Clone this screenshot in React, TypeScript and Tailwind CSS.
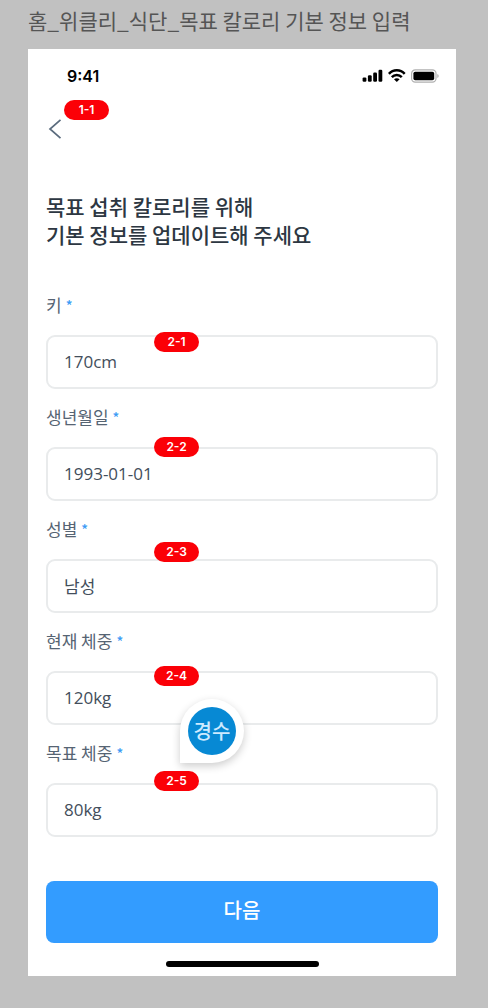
import React, { useState } from 'react';

interface Field {
  id: string;
  label: string;
  value: string;
  tag: string;
  tagPosition: string;
}

const initialFields: Field[] = [
  { id: 'height', label: '키', value: '170cm', tag: '2-1', tagPosition: '-top-[3px]' },
  { id: 'birth', label: '생년월일', value: '1993-01-01', tag: '2-2', tagPosition: '-top-2.5' },
  { id: 'gender', label: '성별', value: '남성', tag: '2-3', tagPosition: '-top-[17px]' },
  { id: 'weight', label: '현재 체중', value: '120kg', tag: '2-4', tagPosition: '-top-[5px]' },
  { id: 'target', label: '목표 체중', value: '80kg', tag: '2-5', tagPosition: '-top-3' },
];

const Tag = ({ text, className }: { text: string; className: string }) => (
  <span
    className={`absolute flex h-5 w-[45px] items-center justify-center rounded-full bg-[#fb0007] font-['Inter',sans-serif] text-xs font-semibold text-white ${className}`}
  >
    {text}
  </span>
);

const StatusIcons = () => (
  <svg width="76" height="14" viewBox="0 0 76 14" fill="none" className="overflow-visible" aria-hidden="true">
    {/* Signal */}
    <rect x="0.6" y="8.4" width="3.8" height="4.4" rx="1.2" fill="#000" />
    <rect x="5.9" y="6.2" width="3.8" height="6.6" rx="1.2" fill="#000" />
    <rect x="11.2" y="3.6" width="3.8" height="9.2" rx="1.2" fill="#000" />
    <rect x="16.5" y="0.8" width="3.8" height="12" rx="1.2" fill="#000" />
    {/* Wifi */}
    <path d="M26.9 4.9C31.2 0 38.4 0 42.7 4.9" stroke="#000" strokeWidth="2.4" />
    <path d="M29.8 8.1C32.5 5.2 37.1 5.2 39.8 8.1" stroke="#000" strokeWidth="2.4" />
    <path d="M34.8 13L32 10.3C33.6 8.9 36 8.9 37.6 10.3Z" fill="#000" />
    {/* Battery */}
    <rect x="49.6" y="0.9" width="24.4" height="12.2" rx="3.6" stroke="#b0b0b0" strokeWidth="1.2" />
    <rect x="51.4" y="2.7" width="20.8" height="8.6" rx="1.8" fill="#000" />
    <path d="M75.4 5C77 5.6 77 8.4 75.4 9Z" fill="#a6a6a6" />
  </svg>
);

const App = () => {
  const [fields, setFields] = useState<Field[]>(initialFields);

  const handleChange = (id: string, value: string) => {
    setFields(fields.map((field) => (field.id === id ? { ...field, value } : field)));
  };

  return (
    <div className="min-h-screen bg-[#c1c1c1] pr-8 pb-8 pl-7 font-['Noto_Sans_CJK_KR',sans-serif]">
      <p className="flex h-[49px] items-center pb-2 text-[21px] whitespace-nowrap text-[#555]">
        홈_위클리_식단_목표 칼로리 기본 정보 입력
      </p>

      <main className="relative bg-white px-[18px] pb-[9px]">
        {/* Status bar */}
        <div className="flex h-[54px] items-center justify-between pl-[21px]">
          <span className="font-['Inter',sans-serif] text-base font-semibold text-black">9:41</span>
          <StatusIcons />
        </div>

        {/* Header */}
        <header className="relative flex h-[52px] items-center">
          <button type="button" aria-label="뒤로" className="px-0.5">
            <svg width="14" height="22" viewBox="0 0 14 22" fill="none">
              <path d="M12.5 1.8L2 11L12.5 20.2" stroke="#5a6b7d" strokeWidth="1.7" />
            </svg>
          </button>
          <Tag text="1-1" className="-top-[3px] left-[18px]" />
        </header>

        <h1 className="mt-[37px] text-[21px] leading-7 font-medium text-[#2d3742]">
          목표 섭취 칼로리를 위해
          <br />
          기본 정보를 업데이트해 주세요
        </h1>

        <form onSubmit={(e) => e.preventDefault()}>
          {/* Fields */}
          <div className="mt-[45px] flex flex-col gap-4">
            {fields.map((field) => (
              <div key={field.id} className="flex flex-col gap-[18px]">
                <label htmlFor={field.id} className="flex h-6 items-center gap-1 text-[17px] text-[#566473]">
                  {field.label}
                  <span className="text-sm font-medium text-[#3b9bf5]">*</span>
                </label>
                <div className="relative">
                  <input
                    id={field.id}
                    type="text"
                    value={field.value}
                    onChange={(e) => handleChange(field.id, e.target.value)}
                    className="block h-[54px] w-full rounded-[9px] border-2 border-[#e9ebec] bg-white px-4 pb-0.5 font-['Open_Sans','Noto_Sans_CJK_KR',sans-serif] text-[17px] text-[#434e5b] outline-none"
                  />
                  <Tag text={field.tag} className={`left-[108px] ${field.tagPosition}`} />
                </div>
              </div>
            ))}
          </div>

          <button
            type="submit"
            className="mt-11 flex h-[62px] w-full items-center justify-center rounded-lg bg-[#339cff] pb-1 text-xl font-medium text-white"
          >
            다음
          </button>
        </form>

        <div className="mx-auto mt-[18px] h-1.5 w-[153px] rounded-full bg-black" />

        {/* Comment bubble */}
        <div className="absolute top-[650px] left-[152px] flex h-16 w-16 items-center justify-center rounded-full rounded-bl-none bg-white shadow-[0_3px_9px_rgba(0,0,0,0.2)]">
          <span className="flex h-12 w-12 items-center justify-center rounded-full bg-[#0789d4] text-xl font-medium text-[#cdeaff]">
            경수
          </span>
        </div>
      </main>
    </div>
  );
};

export default App;
